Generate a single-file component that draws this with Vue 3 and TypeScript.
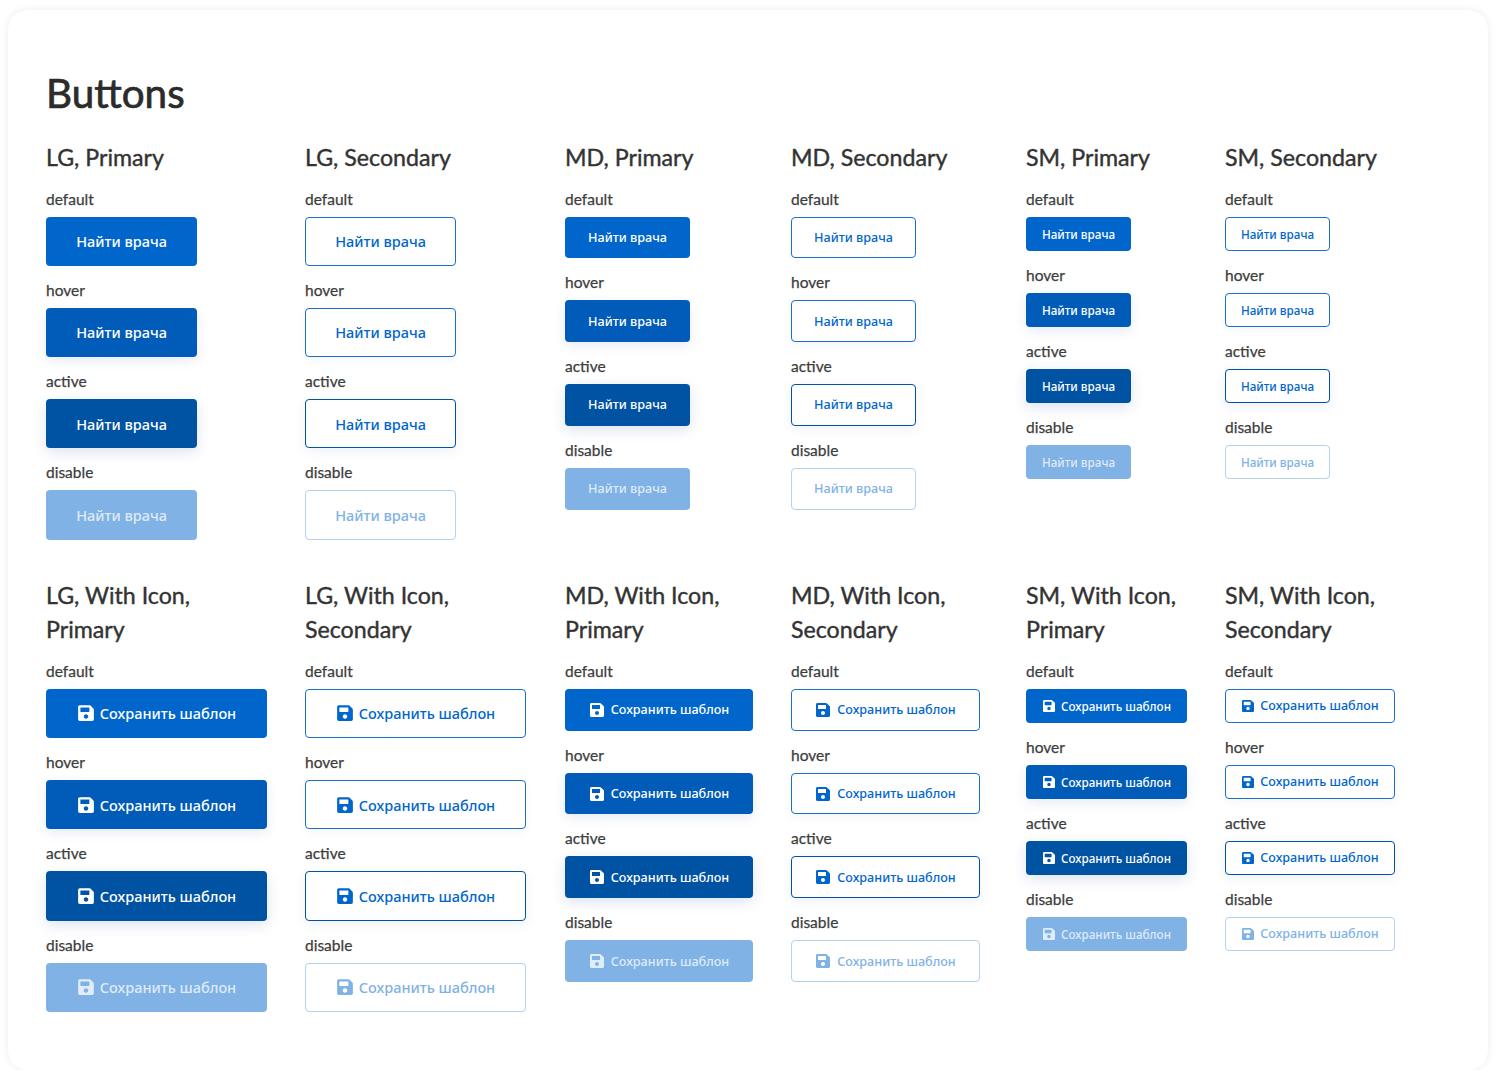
<script setup lang="ts">
type Size = 'lg' | 'md' | 'sm'
type Kind = 'primary' | 'secondary'
interface Col { title: string; size: Size; kind: Kind; icon: boolean }

const states = ['default', 'hover', 'active', 'disable']
const sizes: [Size, string][] = [['lg', 'LG'], ['md', 'MD'], ['sm', 'SM']]
const kinds: [Kind, string][] = [['primary', 'Primary'], ['secondary', 'Secondary']]

const build = (icon: boolean): Col[] =>
  sizes.flatMap(([size, s]) =>
    kinds.map(([kind, k]) => ({
      title: icon ? `${s}, With Icon, ${k}` : `${s}, ${k}`,
      size,
      kind,
      icon,
    })),
  )

const rows: Col[][] = [build(false), build(true)]
</script>

<template>
  <main class="card">
    <h1 class="title">Buttons</h1>
    <section v-for="(row, r) in rows" :key="r" class="row">
      <div v-for="col in row" :key="col.title" class="col">
        <h2 class="heading">{{ col.title }}</h2>
        <div v-for="state in states" :key="state" class="item">
          <div class="label">{{ state }}</div>
          <button type="button" class="btn" :class="[col.size, col.kind, state, { wide: col.icon }]">
            <svg v-if="col.icon" class="ico" viewBox="0 0 448 512" aria-hidden="true">
              <path fill="currentColor" d="M433.941 129.941l-83.882-83.882A48 48 0 0 0 316.118 32H48C21.49 32 0 53.49 0 80v352c0 26.51 21.49 48 48 48h352c26.51 0 48-21.49 48-48V163.882a48 48 0 0 0-14.059-33.941zM224 416c-35.346 0-64-28.654-64-64 0-35.346 28.654-64 64-64s64 28.654 64 64c0 35.346-28.654 64-64 64zm96-304.52V212c0 6.627-5.373 12-12 12H76c-6.627 0-12-5.373-12-12V108c0-6.627 5.373-12 12-12h228.52c3.183 0 6.235 1.264 8.485 3.515l3.48 3.48A11.996 11.996 0 0 1 320 111.48z" />
            </svg>
            <span>{{ col.icon ? 'Сохранить шаблон' : 'Найти врача' }}</span>
          </button>
        </div>
      </div>
    </section>
  </main>
</template>

<style>
html, body { background: #fff; }
</style>

<style scoped>
.card {
  box-sizing: border-box;
  width: 1480px;
  height: 1060px;
  margin: 10px 8px 0;
  padding: 57px 38px 0;
  background: #fff;
  border-radius: 20px;
  box-shadow: 0 0 8px rgba(0, 0, 0, 0.08);
  font-family: Lato, "Noto Sans", sans-serif;
}
.title {
  margin: 0 0 21px;
  font-size: 40.4px;
  line-height: 52px;
  font-weight: 400;
  color: #2b2b2b;
  -webkit-text-stroke: 0.7px #2b2b2b;
}
.row {
  display: grid;
  grid-template-columns: 221px 222px 188px 197px 161px 170px;
  column-gap: 38px;
  margin-bottom: 38px;
}
.heading {
  margin: 0 0 14px;
  font-size: 23.2px;
  line-height: 34.5px;
  font-weight: 400;
  color: #333;
  -webkit-text-stroke: 0.4px #333;
}
.item { display: flex; flex-direction: column; align-items: flex-start; margin-bottom: 14px; }
.item:last-child { margin-bottom: 0; }
.label {
  font-size: 15.5px;
  line-height: 20px;
  color: #3d3d3d;
  margin-bottom: 8px;
  -webkit-text-stroke: 0.25px #3d3d3d;
}
.btn {
  box-sizing: border-box;
  display: inline-flex;
  align-items: center;
  justify-content: center;
  border: 1px solid transparent;
  border-radius: 4px;
  padding: 0;
  font-family: "Noto Sans", sans-serif;
  font-weight: 500;
}
.wide { padding-left: 1px; }
.lg { width: 151px; height: 49.33px; font-size: 14.5px; gap: 6px; }
.md { width: 125px; height: 41.8px; font-size: 12.6px; gap: 7px; }
.sm { width: 105px; height: 34px; font-size: 11.7px; gap: 6px; }
.lg.wide { width: 221px; }
.md.wide { width: 188px; }
.md.wide.secondary { width: 189px; }
.sm.wide { width: 161px; }
.sm.wide.secondary { width: 170px; font-size: 12.6px; }
.ico { height: 16px; width: 14px; flex: none; }
.lg .ico { height: 18px; width: 16px; }
.sm .ico { height: 14px; width: 12px; }
.primary { color: #fff; background: #0066cc; }
.primary.hover { background: #005cb8; box-shadow: 0 4px 12px rgba(0, 60, 140, 0.1); }
.primary.active { background: #0052a3; box-shadow: 0 4px 14px rgba(0, 60, 140, 0.14); }
.primary.disable { background: #80b2e5; color: rgba(255, 255, 255, 0.75); }
.secondary { color: #0066cc; background: #fff; border-color: #1a70c8; }
.secondary.hover { box-shadow: 0 3px 10px rgba(0, 60, 140, 0.05); }
.secondary.active { border-color: #0052a3; box-shadow: 0 3px 12px rgba(0, 60, 140, 0.08); }
.secondary.disable { color: #80b2e5; border-color: #b3d1f0; }
</style>
